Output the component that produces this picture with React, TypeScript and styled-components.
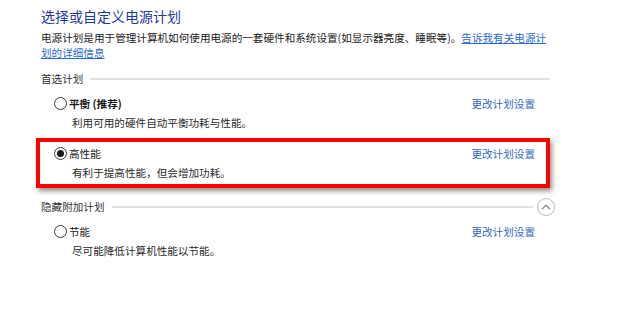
import React, {useState} from 'react';
import styled, {createGlobalStyle} from "styled-components"

const GlobalStyle = createGlobalStyle`
body {
margin: 0;
background: #fff;
font-family: "Noto Sans CJK SC", "Noto Sans", sans-serif;
color: #1a1a1a;
}
`
const Page = styled.div`
width: 509px;
padding: 6px 0 20px 41px;
display: flex;
flex-direction: column;
`
const Title = styled.h1`
margin: 0;
font-size: 14px;
line-height: 20px;
font-weight: 400;
color: #1f3a9e;
`
const Intro = styled.p`
margin: 4px 0 0;
font-size: 10.6px;
line-height: 15px;
color: #1a1a1a;
& a {
color: #2a6bd0;
text-decoration: underline;
}
`
const SectionHeader = styled.div<{$collapsible?: boolean}>`
display: flex;
align-items: center;
gap: 7px;
height: 14px;
margin-top: 12px;
margin-bottom: 2px;
margin-right: ${p => p.$collapsible ? '-5px' : '0'};
font-size: 10.6px;
line-height: 14px;
color: #333;
&::after {
content: "";
flex: 1;
height: 2px;
background: #e2e2e2;
order: 1;
}
`
const CollapseButton = styled.button`
order: 2;
width: 18px;
height: 18px;
margin-left: -3px;
padding: 0;
border: 1.5px solid #bcbcbc;
border-radius: 50%;
background: #fff;
display: flex;
align-items: center;
justify-content: center;
flex-shrink: 0;
`
const Plan = styled.div<{$highlighted?: boolean}>`
margin-left: -5px;
padding: 4px 11px 4px 14px;
border: 4px solid ${p => p.$highlighted ? '#ff0000' : 'transparent'};
box-shadow: ${p => p.$highlighted ? '2px 3px 5px rgba(0,0,0,0.45)' : 'none'};
display: grid;
grid-template-columns: 1fr auto;
row-gap: 4px;
`
const PlanLabel = styled.label`
display: flex;
align-items: center;
gap: 2px;
font-size: 10.6px;
line-height: 15px;
color: #1a1a1a;
`
const PlanName = styled.span<{$bold?: boolean}>`
font-weight: ${p => p.$bold ? 700 : 400};
`
const Radio = styled.span<{$checked?: boolean}>`
width: 13px;
height: 13px;
box-sizing: border-box;
border: 1px solid #3a3a3a;
border-radius: 50%;
display: flex;
align-items: center;
justify-content: center;
&::after {
content: "";
width: 7px;
height: 7px;
border-radius: 50%;
background: ${p => p.$checked ? '#1a1a1a' : 'transparent'};
}
`
const ChangeLink = styled.a`
font-size: 10.6px;
line-height: 15px;
color: #3369c8;
text-decoration: none;
`
const PlanDesc = styled.div`
grid-column: 1 / -1;
padding-left: 18px;
font-size: 10.6px;
line-height: 15px;
color: #2a2a2a;
`

type PlanData = { name: string, desc: string, bold?: boolean }

const PlanItem = ({plan, checked, highlighted, onSelect}: {plan: PlanData, checked: boolean, highlighted?: boolean, onSelect: () => void}) => (
    <Plan $highlighted={highlighted}>
        <PlanLabel onClick={onSelect}>
            <Radio $checked={checked}/>
            <PlanName $bold={plan.bold}>{plan.name}</PlanName>
        </PlanLabel>
        <ChangeLink href="#">更改计划设置</ChangeLink>
        <PlanDesc>{plan.desc}</PlanDesc>
    </Plan>
)

const App = () => {
    const [current, setCurrent] = useState('高性能')
    const preferred: PlanData[] = [
        {name: '平衡 (推荐)', desc: '利用可用的硬件自动平衡功耗与性能。', bold: true},
        {name: '高性能', desc: '有利于提高性能，但会增加功耗。'},
    ]
    const extra: PlanData[] = [
        {name: '节能', desc: '尽可能降低计算机性能以节能。'},
    ]
    return (
        <Page>
            <GlobalStyle/>
            <Title>选择或自定义电源计划</Title>
            <Intro>
                电源计划是用于管理计算机如何使用电源的一套硬件和系统设置(如显示器亮度、睡眠等)。<a href="#">告诉我有关电源计划的详细信息</a>
            </Intro>
            <SectionHeader>首选计划</SectionHeader>
            {preferred.map(p => (
                <PlanItem key={p.name} plan={p} checked={current === p.name}
                          highlighted={p.name === '高性能'} onSelect={() => setCurrent(p.name)}/>
            ))}
            <SectionHeader $collapsible>
                隐藏附加计划
                <CollapseButton>
                    <svg width="10" height="6" viewBox="0 0 10 6">
                        <path d="M1 5.2 L5 1.2 L9 5.2" fill="none" stroke="#8a8a8a" strokeWidth="1.3"/>
                    </svg>
                </CollapseButton>
            </SectionHeader>
            {extra.map(p => (
                <PlanItem key={p.name} plan={p} checked={current === p.name} onSelect={() => setCurrent(p.name)}/>
            ))}
        </Page>
    );
};

export default App;
